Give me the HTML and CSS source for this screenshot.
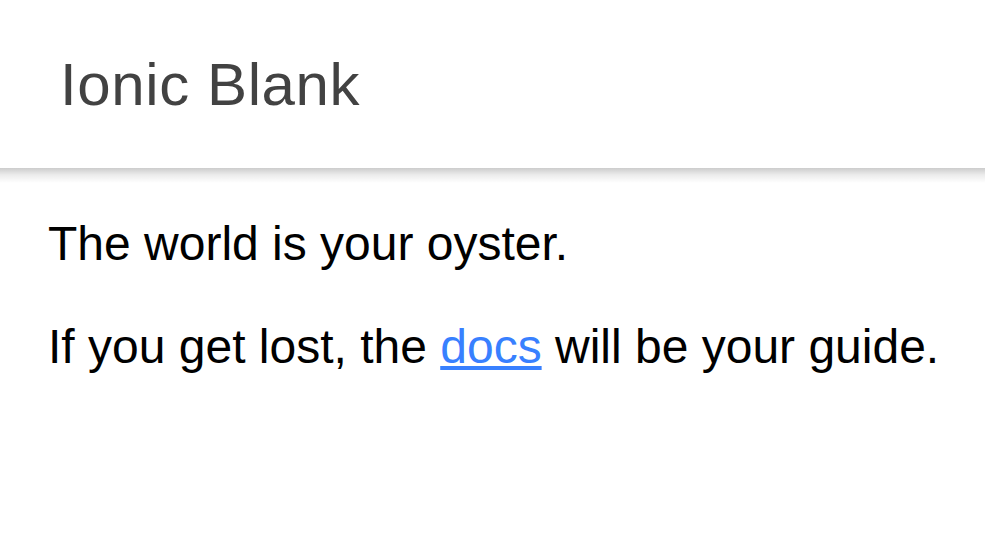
FILE: index.html
```html
<!DOCTYPE html>
<html lang="en">
<head>
<meta charset="utf-8">
<title>Ionic Blank</title>
<link rel="stylesheet" href="styles.css">
</head>
<body>
<div class="app">
  <header class="header">
    <div class="toolbar">
      <div class="title">Ionic Blank</div>
    </div>
  </header>
  <main class="content">
    <p class="para">The world is your oyster.</p>
    <p class="para">If you get lost, the <a class="link" href="#">docs</a> will be your guide.</p>
  </main>
</div>
</body>
</html>
```

FILE: styles.css
```css
html, body {
  margin: 0;
  padding: 0;
  background: #ffffff;
}
body {
  font-family: "Liberation Sans", Arial, sans-serif;
  width: 985px;
  height: 540px;
  overflow: hidden;
}
.app {
  display: flex;
  flex-direction: column;
  height: 540px;
}
.header {
  position: relative;
  z-index: 2;
  background: #ffffff;
}
.header::after {
  content: "";
  position: absolute;
  left: 0;
  right: 0;
  bottom: -15px;
  height: 15px;
  background: linear-gradient(to bottom, rgba(0,0,0,0.2) 0%, rgba(0,0,0,0.08) 45%, rgba(0,0,0,0) 100%);
}
.toolbar {
  height: 168px;
  display: flex;
  align-items: center;
}
.title {
  padding: 0 60px;
  font-size: 60px;
  font-weight: 400;
  color: #424242;
  letter-spacing: 0.01em;
}
.content {
  flex: 1;
  padding: 48px 16px 48px 48px;
  color: #000000;
  font-size: 48px;
}
.para {
  margin: 0 0 48px 0;
  white-space: nowrap;
}
.link {
  color: #3880ff;
  text-decoration: underline;
}
```
